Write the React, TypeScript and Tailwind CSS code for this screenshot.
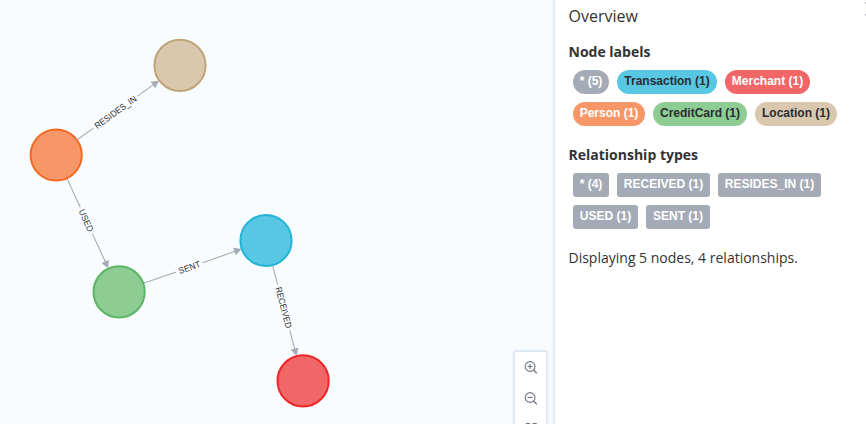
import React from "react";

type GraphNode = { x: number; y: number; fill: string; stroke: string };

const nodes: GraphNode[] = [
  { x: 180, y: 65.4, fill: "#D9C8AE", stroke: "#C0A378" },
  { x: 56.2, y: 155, fill: "#F79767", stroke: "#F36924" },
  { x: 119.1, y: 291.9, fill: "#8DCC93", stroke: "#5DB665" },
  { x: 266, y: 240.5, fill: "#57C7E3", stroke: "#23B3D7" },
  { x: 303.1, y: 380.9, fill: "#F16667", stroke: "#EB2728" },
];

type Edge = { from: number; to: number; label: string; gap: number; textWidth: number };

const edges: Edge[] = [
  { from: 1, to: 0, label: "RESIDES_IN", gap: 54.5, textWidth: 49.5 },
  { from: 1, to: 2, label: "USED", gap: 29, textWidth: 23.5 },
  { from: 2, to: 3, label: "SENT", gap: 28, textWidth: 22.5 },
  { from: 3, to: 4, label: "RECEIVED", gap: 47.5, textWidth: 42 },
];

function Relationship({ edge }: { edge: Edge }) {
  const a = nodes[edge.from];
  const b = nodes[edge.to];
  const dist = Math.hypot(b.x - a.x, b.y - a.y);
  const angle = (Math.atan2(b.y - a.y, b.x - a.x) * 180) / Math.PI;
  const start = 26;
  const end = dist - 26;
  const mid = (start + end - 7) / 2 + 0.2;
  return (
    <g transform={`translate(${a.x} ${a.y}) rotate(${angle})`}>
      <path
        d={`M${start} 0H${mid - edge.gap / 2}M${mid + edge.gap / 2} 0H${end - 6}`}
        stroke="#A5ABB6"
        strokeWidth="1.1"
        fill="none"
      />
      <path d={`M${end - 7.4} -4L${end} 0L${end - 7.4} 4Z`} fill="#A5ABB6" />
      <text
        x={mid}
        y="3.2"
        textAnchor="middle"
        textLength={edge.textWidth}
        lengthAdjust="spacingAndGlyphs"
        fill="#333333"
        className="font-['Liberation_Sans',sans-serif] text-[8.9px]"
      >
        {edge.label}
      </text>
    </g>
  );
}

function Magnifier({ plus }: { plus?: boolean }) {
  return (
    <svg className="block h-3.5 w-3.5 shrink-0" viewBox="0 0 14 14" fill="none" stroke="#717680" strokeWidth="1.1">
      <circle cx="6.1" cy="5.5" r="4.9" />
      <path d="M3.5 5.5H8.5" />
      <path d="M9.5 9L12.8 12.3" strokeWidth="1.3" />
      {plus && <path d="M6 3V8" />}
    </svg>
  );
}

const labels = [
  [
    { text: "* (5)", style: "w-9 bg-[#A5ABB6] text-white" },
    { text: "Transaction (1)", style: "w-[100px] bg-[#57C7E3] text-[#2A2C34]" },
    { text: "Merchant (1)", style: "w-[85px] bg-[#F16667] text-white" },
  ],
  [
    { text: "Person (1)", style: "w-[72px] bg-[#F79767] text-white" },
    { text: "CreditCard (1)", style: "w-[94px] bg-[#8DCC93] text-[#2A2C34]" },
    { text: "Location (1)", style: "w-[82px] bg-[#D9C8AE] text-[#2A2C34]" },
  ],
];

const types = [
  [
    { text: "* (4)", style: "w-9" },
    { text: "RECEIVED (1)", style: "w-[93px]" },
    { text: "RESIDES_IN (1)", style: "w-[103px]" },
  ],
  [
    { text: "USED (1)", style: "w-[65px]" },
    { text: "SENT (1)", style: "w-16" },
  ],
];

const chip =
  "flex h-6 shrink-0 items-center justify-center whitespace-nowrap pb-0.5 font-[Helvetica,'Liberation_Sans',sans-serif] text-xs font-bold";

export default function App() {
  return (
    <div className="flex h-[424px] w-[866px] overflow-hidden bg-[#F9FCFF] font-['Open_Sans',sans-serif] text-[#333333]">
      <main className="relative w-[554px] shrink-0">
        <svg className="block h-[424px] w-[554px]" viewBox="0 0 554 424">
          {edges.map((edge) => (
            <Relationship key={edge.label} edge={edge} />
          ))}
          {nodes.map((n) => (
            <circle key={n.fill} cx={n.x} cy={n.y} r="25.6" fill={n.fill} stroke={n.stroke} strokeWidth="2" />
          ))}
        </svg>
        <div className="absolute top-[351px] left-[514px] flex h-24 w-[33px] flex-col items-center border border-[#DAE4F0] bg-white pt-[9px] shadow-[0_0_3px_rgba(90,120,160,0.25)]">
          <Magnifier plus />
          <div className="h-[17px] shrink-0" />
          <Magnifier />
          <svg className="mt-[15px] block h-3.5 w-3.5 shrink-0" viewBox="0 0 14 14" fill="none" stroke="#717680">
            <path d="M2 5V2.5H6M8.5 2.5H12.5V5" />
          </svg>
        </div>
      </main>
      <aside className="relative flex-1 overflow-hidden border-l border-[#E0E8F0] bg-white pl-[13.5px] shadow-[0_0_3px_rgba(90,120,160,0.2)]">
        <h2 className="mt-1 text-base leading-6">Overview</h2>
        <h3 className="mt-[14px] text-sm leading-5 font-bold">Node labels</h3>
        <div className="mt-2 ml-[4.5px] flex flex-col gap-2">
          {labels.map((row, i) => (
            <div key={i} className="flex gap-2">
              {row.map((item) => (
                <span key={item.text} className={`${chip} rounded-full ${item.style}`}>
                  {item.text}
                </span>
              ))}
            </div>
          ))}
        </div>
        <h3 className="mt-[19px] text-sm leading-5 font-bold">Relationship types</h3>
        <div className="mt-2 ml-[4.5px] flex flex-col gap-2">
          {types.map((row, i) => (
            <div key={i} className="flex gap-2">
              {row.map((item) => (
                <span key={item.text} className={`${chip} rounded-[3px] bg-[#A5ABB6] text-white ${item.style}`}>
                  {item.text}
                </span>
              ))}
            </div>
          ))}
        </div>
        <p className="mt-[19px] text-sm leading-5">Displaying 5 nodes, 4 relationships.</p>
        <div className="absolute top-0.5 right-0 h-3.5 w-px border-y-2 border-[#B8BBC1]" />
      </aside>
    </div>
  );
}
